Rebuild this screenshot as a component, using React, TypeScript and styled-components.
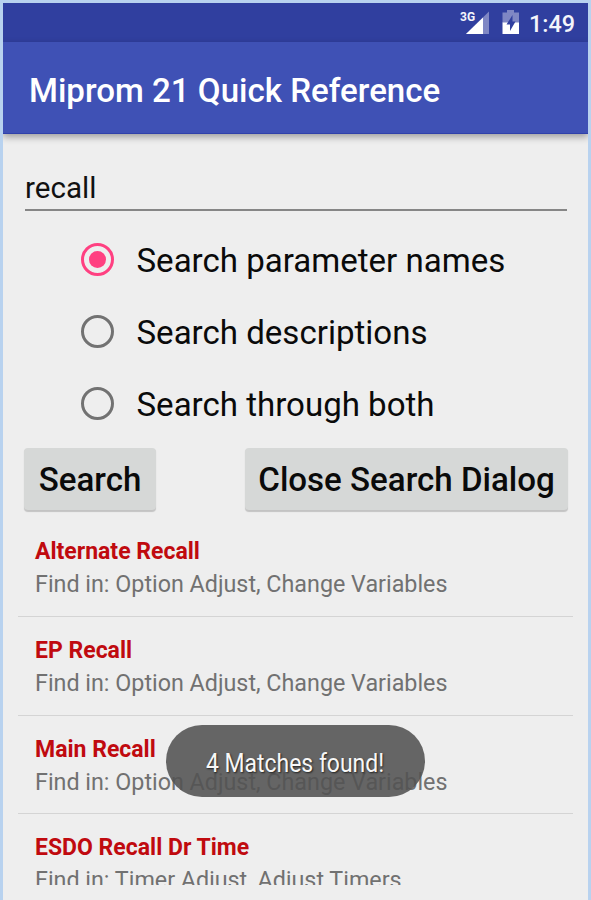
import React, { useState } from 'react';
import styled, { createGlobalStyle } from 'styled-components';

const GlobalStyle = createGlobalStyle`
  * { box-sizing: border-box; }
  html, body { margin: 0; padding: 0; }
  body { font-family: Roboto, "Liberation Sans", sans-serif; background: #eeeeee; overflow: hidden; }
`;

const Screen = styled.div`
  position: relative;
  width: 591px;
  height: 900px;
  display: flex;
  flex-direction: column;
  overflow: hidden;
  background: #eeeeee;
  border: 3px solid #b8d2ef;
  border-bottom: 0;
`;

const StatusBar = styled.div`
  flex: none;
  height: 39px;
  display: flex;
  justify-content: flex-end;
  gap: 8px;
  padding-right: 13px;
  background: #303f9f;
  color: #f4f5fb;
`;

const StatusIcons = styled.svg`
  display: block;
  width: 66px;
  height: 39px;
`;

const NetworkLabel = styled.text`
  font: 700 12px Roboto, sans-serif;
  fill: #f4f5fb;
`;

const Clock = styled.span`
  width: 47px;
  text-align: right;
  font-size: 23.4px;
  font-weight: 500;
  line-height: 42px;
  white-space: nowrap;
`;

const AppBar = styled.header`
  flex: none;
  height: 92px;
  padding: 5px 0 0 24px;
  background: #3f51b5;
  border-bottom: 1px solid #3041aa;
  box-shadow: 0 3px 7px rgba(0, 0, 0, 0.34);
  z-index: 1;
`;

const Title = styled.h1`
  margin: 0 0 0 2px;
  color: #fff;
  font-size: 33.1px;
  font-weight: 500;
  line-height: 88px;
  white-space: nowrap;
`;

const Content = styled.main`
  display: flex;
  flex-direction: column;
  padding: 36px 15px 0;
`;

const Field = styled.input`
  width: 542px;
  height: 41px;
  margin: 0 7px;
  padding: 0 0 4px;
  border: 0;
  border-bottom: 2px solid #868686;
  border-radius: 0;
  outline: 0;
  background: transparent;
  color: #111;
  font: 400 29.6px Roboto, sans-serif;
`;

const RadioGroup = styled.div`
  display: flex;
  flex-direction: column;
  padding: 13px 0 0 63px;
`;

const RadioRow = styled.label`
  height: 72px;
  display: flex;
  align-items: center;
  gap: 22.5px;
  color: #0a0a0a;
  font-size: 33.05px;
  white-space: nowrap;

  span { line-height: 70px; padding-top: 2px; }
`;

const RadioDot = styled.i<{ $on: boolean }>`
  width: 33px;
  height: 33px;
  margin-bottom: 2px;
  display: grid;
  place-items: center;
  border: 3px solid ${p => (p.$on ? '#ff4081' : '#727272')};
  border-radius: 50%;

  &::after {
    content: '';
    width: 17px;
    height: 17px;
    border-radius: 50%;
    background: ${p => (p.$on ? '#ff4081' : 'transparent')};
  }
`;

const Actions = styled.div`
  display: flex;
  justify-content: space-between;
  padding: 8px 5px 0 6px;
`;

const Button = styled.button<{ $width: number }>`
  width: ${p => p.$width}px;
  height: 62px;
  padding: 1px 0 0;
  border: 0;
  border-radius: 4px;
  background: #d6d8d7;
  box-shadow: 0 1.5px 1px rgba(0, 0, 0, 0.18);
  color: #0a0a0a;
  font: 500 33.1px/62px Roboto, sans-serif;
  white-space: nowrap;
`;

const Results = styled.ul`
  height: 367px;
  margin: 8px 0 0;
  padding: 0;
  overflow: hidden;
  list-style: none;
`;

const Result = styled.li`
  height: 98.8px;
  padding: 17px 0 0 17px;
  border-bottom: 1px solid #d4d4d4;
`;

const Name = styled.div`
  color: #c00a0f;
  font-size: 23px;
  font-weight: 700;
  line-height: 34px;
  white-space: nowrap;
`;

const Location = styled.div`
  color: #717171;
  font-size: 23.3px;
  line-height: 31px;
  white-space: nowrap;
`;

const Toast = styled.div`
  position: absolute;
  left: 163px;
  top: 722px;
  width: 259px;
  height: 72px;
  display: flex;
  justify-content: center;
  border-radius: 36px;
  background: rgba(82, 82, 82, 0.88);
  color: #f7f7f7;
  font-size: 25.5px;
  line-height: 76px;
  white-space: nowrap;
  text-shadow: 1px 1px 2px rgba(0, 0, 0, 0.7);
  z-index: 2;

  span { transform: scaleX(0.9); }
`;

const options = ['Search parameter names', 'Search descriptions', 'Search through both'];

const results = [
  { name: 'Alternate Recall', location: 'Find in: Option Adjust, Change Variables' },
  { name: 'EP Recall', location: 'Find in: Option Adjust, Change Variables' },
  { name: 'Main Recall', location: 'Find in: Option Adjust, Change Variables' },
  { name: 'ESDO Recall Dr Time', location: 'Find in: Timer Adjust, Adjust Timers' },
];

export default function App() {
  const [query, setQuery] = useState('recall');
  const [selected, setSelected] = useState(0);

  return (
    <>
      <GlobalStyle />
      <Screen>
        <StatusBar>
          <StatusIcons viewBox="0 0 66 39">
            <path d="M12 31L35 8.5V31Z" fill="#7f87c4" />
            <path d="M12 31L29 14.4V31Z" fill="#fff" />
            <path d="M6 7H21V16L19 18H6Z" fill="#303f9f" />
            <NetworkLabel x="6" y="17.5">3G</NetworkLabel>
            <path d="M48.5 9.5H53V7H60V9.5H65V20H48.5Z" fill="#7f87c4" />
            <path d="M48.5 19.5H65V31H48.5Z" fill="#fff" />
            <path d="M58.5 12L52.5 21.5H56V28L61.5 18.5H58.5Z" fill="#303f9f" />
          </StatusIcons>
          <Clock>1:49</Clock>
        </StatusBar>
        <AppBar>
          <Title>Miprom 21 Quick Reference</Title>
        </AppBar>
        <Content>
          <Field value={query} onChange={e => setQuery(e.target.value)} aria-label="Search text" />
          <RadioGroup role="radiogroup">
            {options.map((label, i) => (
              <RadioRow key={label} role="radio" aria-checked={i === selected} onClick={() => setSelected(i)}>
                <RadioDot $on={i === selected} />
                <span>{label}</span>
              </RadioRow>
            ))}
          </RadioGroup>
          <Actions>
            <Button $width={132}>Search</Button>
            <Button $width={323}>Close Search Dialog</Button>
          </Actions>
          <Results>
            {results.map(r => (
              <Result key={r.name}>
                <Name>{r.name}</Name>
                <Location>{r.location}</Location>
              </Result>
            ))}
          </Results>
        </Content>
        <Toast><span>4 Matches found!</span></Toast>
      </Screen>
    </>
  );
}
